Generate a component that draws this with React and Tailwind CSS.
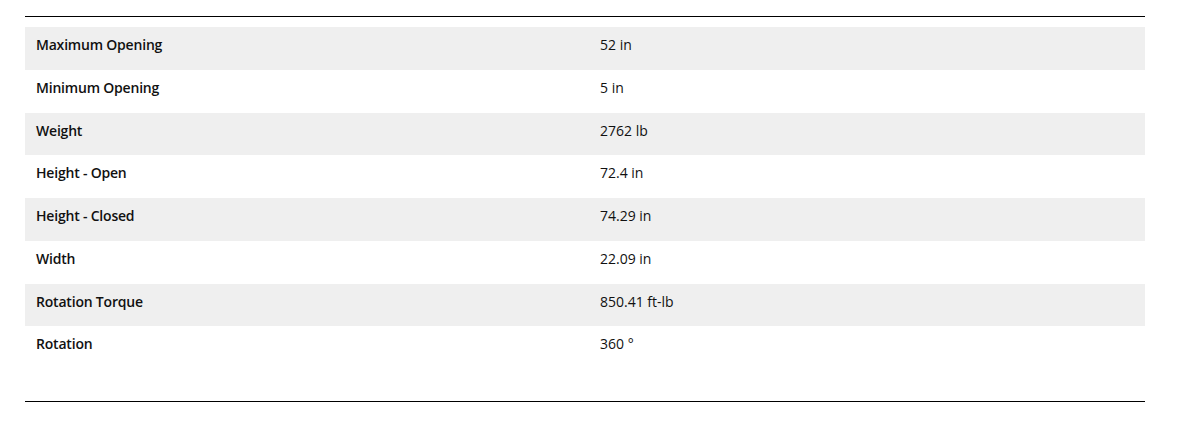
const specs = [
  ['Maximum Opening', '52 in'],
  ['Minimum Opening', '5 in'],
  ['Weight', '2762 lb'],
  ['Height - Open', '72.4 in'],
  ['Height - Closed', '74.29 in'],
  ['Width', '22.09 in'],
  ['Rotation Torque', '850.41 ft-lb'],
  ['Rotation', '360 °'],
]

export default function App() {
  return (
    <div className="w-[1178px] h-[422px] bg-white pt-4 px-[25px] text-[14px] leading-[18px] text-[#111] font-[family-name:'Open_Sans',sans-serif]">
      <div className="border-t border-black pt-[10px] pb-8 w-[1120px]">
        {specs.map(([label, value], i) => (
          <div
            key={label}
            className={`grid grid-cols-[564px_1fr] h-[42.75px] pt-[9px] ${i % 2 === 0 ? 'bg-[#efefef]' : 'bg-white'}`}
          >
            <div className="pl-[11px] font-semibold tracking-[-0.2px]">{label}</div>
            <div className="pl-[11px]">{value}</div>
          </div>
        ))}
      </div>
      <div className="border-t border-black w-[1120px]" />
    </div>
  )
}
